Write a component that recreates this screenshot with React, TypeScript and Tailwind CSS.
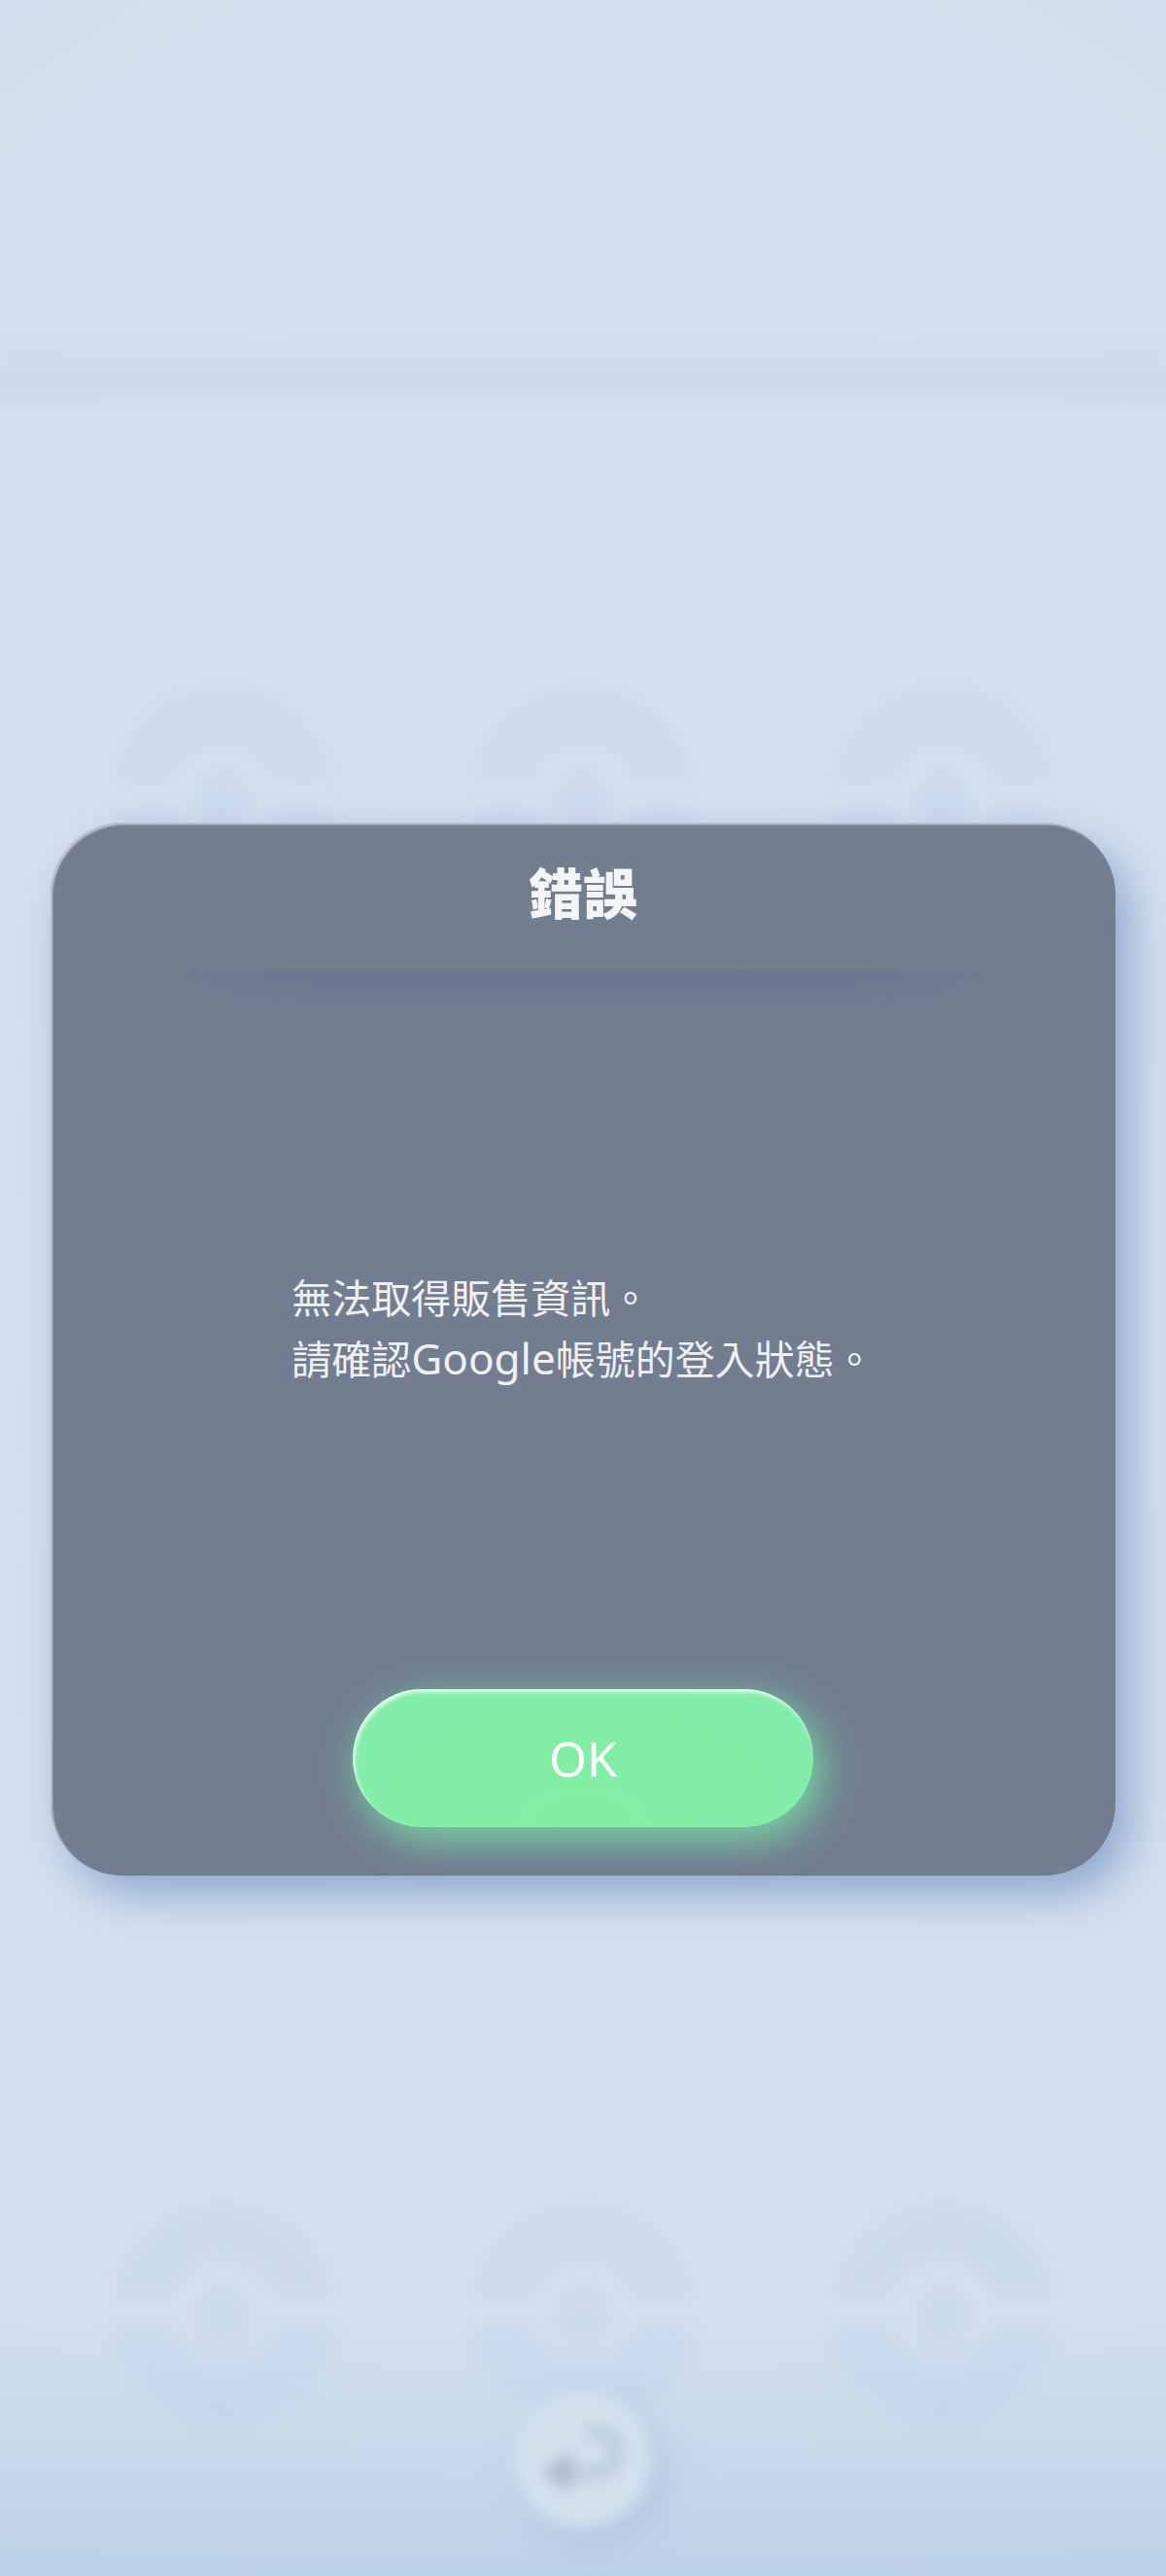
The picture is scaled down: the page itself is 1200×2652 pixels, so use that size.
import { useId } from 'react';

function Ball() {
  const id = useId();
  return (
    <svg viewBox="0 0 232 232" className="size-58 blur-[8px]" aria-hidden="true">
      <mask id={id}>
        <circle cx="116" cy="116" r="115" fill="#fff" />
        <rect x="0" y="101" width="232" height="30" fill="#000" />
        <circle cx="116" cy="116" r="54" fill="#000" />
        <circle cx="116" cy="116" r="29" fill="#fff" />
      </mask>
      <rect width="232" height="232" fill="#c0d3ea" opacity="0.4" mask={`url(#${id})`} />
    </svg>
  );
}

function BallRow() {
  return (
    <div className="flex justify-between px-[114px]">
      <Ball />
      <Ball />
      <Ball />
    </div>
  );
}

export default function App() {
  return (
    <div className="relative flex min-h-screen flex-col overflow-hidden bg-[radial-gradient(ellipse_120%_70%_at_50%_50%,#d8e2f0_0%,#d6e1ef_50%,#d2e0ec_80%,#c6daea_100%)] font-['Noto_Sans','Noto_Sans_CJK_TC',sans-serif]">
      <div className="h-[348px]" />
      <div className="h-9 bg-linear-to-b from-[#cbd9e8]/20 to-[#cbd9e8]/50 blur-[3px]" />
      <div className="-mx-4 h-10 bg-linear-to-b from-[#c5d4e6]/75 to-[#c5d4e6]/0 blur-[3px]" />

      <div className="mt-[281px]">
        <BallRow />
      </div>
      <div className="mt-auto flex flex-col bg-linear-to-b from-[#b8cee6]/0 from-30% to-[#b8cee6]/80">
        <BallRow />
        <div className="z-10 -mt-9 mb-[50px] flex justify-center">
          <button
            type="button"
            aria-label="返回"
            className="flex size-35 items-center justify-center rounded-full bg-[#d4e2ee] shadow-[12px_16px_36px_#b0c4e0] blur-[8px]"
          >
            <svg viewBox="0 0 100 100" className="size-25" fill="none" aria-hidden="true">
              <path
                d="M58 22 H64 C92 22 92 64 64 64 H34"
                stroke="#bac9d8"
                strokeWidth="14"
                strokeLinecap="round"
              />
              <path d="M38 40 V86 L8 63 Z" fill="#acb9cd" />
            </svg>
          </button>
        </div>
      </div>

      <div className="absolute inset-0 z-20 flex flex-col px-[52px] pt-[847px]">
        <section
          role="dialog"
          aria-labelledby="dialog-title"
          className="flex w-full flex-col items-center rounded-[74px] bg-[#727d8f] pb-[50px] shadow-[inset_2px_2px_2px_#c4c8d0,16px_20px_48px_#8fa8cf]"
        >
          <h1 id="dialog-title" className="pt-[30px] text-[56px] leading-[84px] font-black text-[#f4f5f7]">
            錯誤
          </h1>
          <div className="mt-[38px] h-10 w-[860px] bg-linear-to-b from-[#6a7592] to-[#727d8f] mask-[linear-gradient(to_right,transparent,black_20%,black_80%,transparent)]" />
          <p className="mt-[266px] text-[41px] leading-[62px] whitespace-nowrap text-[#eef0f4]">
            無法取得販售資訊。
            <br />
            請確認<span className="text-[44px]">Google</span>帳號的登入狀態。
          </p>
          <button
            type="button"
            className="mt-[309px] h-[142px] w-[474px] rounded-full bg-[radial-gradient(ellipse_at_50%_100%,#83eea2_0%,#82ecac_100%)] text-[50px] text-white shadow-[inset_2px_3px_4px_#e8fbf0,8px_12px_40px_#78d8a6]"
          >
            OK
          </button>
        </section>
      </div>
    </div>
  );
}
